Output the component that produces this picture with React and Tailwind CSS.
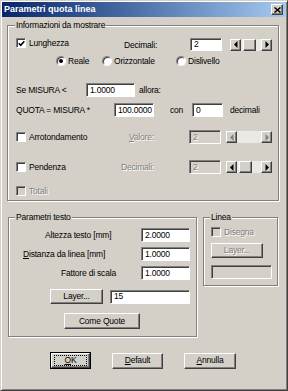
const raised =
  "border border-white border-r-[#404040] border-b-[#404040] shadow-[inset_-1px_-1px_0_#808080] bg-[#d4d0c8]";
const sunken =
  "border border-[#808080] border-r-white border-b-white shadow-[inset_1px_1px_0_#404040]";
const dim = "text-[#808080] [text-shadow:1px_1px_0_#fff]";

function Check({ checked, disabled }) {
  return (
    <span
      className={`w-[10px] h-[10px] shrink-0 flex items-center justify-center ${sunken} ${
        disabled ? "bg-[#d4d0c8]" : "bg-white"
      }`}
    >
      {checked && (
        <svg width="7" height="7" viewBox="0 0 7 7">
          <path d="M0.8 3.2 L2.7 5.2 L6.3 1.2" stroke="#000" strokeWidth="1.6" fill="none" />
        </svg>
      )}
    </span>
  );
}

function Radio({ on }) {
  return (
    <span className="w-[10px] h-[10px] shrink-0 rounded-full bg-white border border-[#808080] border-r-white border-b-white shadow-[inset_1px_1px_0_#404040] flex items-center justify-center">
      {on && <span className="w-[4px] h-[4px] rounded-full bg-black" />}
    </span>
  );
}

function Field({ className, value, disabled }) {
  return (
    <span
      className={`flex items-center pl-[3px] ${sunken} ${
        disabled ? `bg-[#d4d0c8] ${dim}` : "bg-white"
      } ${className}`}
    >
      {value}
    </span>
  );
}

function Arrow({ dir, disabled }) {
  return (
    <svg width="4" height="7" viewBox="0 0 4 7">
      <polygon
        points={dir === "l" ? "3.5,0 3.5,7 0,3.5" : "0.5,0 0.5,7 4,3.5"}
        fill={disabled ? "#808080" : "#000"}
      />
    </svg>
  );
}

function Scroll({ className, disabled }) {
  return (
    <div className={`flex h-[12px] bg-[#ebe9e5] ${className}`}>
      <span className={`w-[11px] h-full flex items-center justify-center ${raised}`}>
        <Arrow dir="l" disabled={disabled} />
      </span>
      {!disabled && <span className={`ml-[2px] w-[13px] h-full ${raised}`} />}
      <span className="flex-1" />
      <span className={`w-[11px] h-full flex items-center justify-center ${raised}`}>
        <Arrow dir="r" disabled={disabled} />
      </span>
    </div>
  );
}

function Btn({ className, children, disabled }) {
  return (
    <span className={`flex items-center justify-center ${raised} ${disabled ? dim : ""} ${className}`}>
      {children}
    </span>
  );
}

function Group({ title, className, legend, children }) {
  return (
    <div
      className={`relative flex flex-col border border-[#808080] shadow-[inset_1px_1px_0_#fff,1px_1px_0_#fff] ${className}`}
    >
      <span className={`absolute -top-[6px] ${legend} bg-[#d4d0c8] px-[1px] leading-[10px]`}>
        {title}
      </span>
      {children}
    </div>
  );
}

export default function App() {
  return (
    <div className="w-[288px] h-[391px] bg-[#d4d0c8] border border-[#d4d0c8] border-r-[#404040] border-b-[#404040] shadow-[inset_1px_1px_0_#fff,inset_-1px_-1px_0_#808080] p-[1px] font-['Liberation_Sans',Arial,sans-serif] text-[8.5px] tracking-[-0.2px] leading-none text-black overflow-hidden">
      <div className="h-[15px] flex items-center justify-between pl-[2px] pr-[3px] bg-linear-to-r from-[#0a246a] to-[#a6caf0]">
        <span className="text-white font-bold text-[9px] tracking-normal">Parametri quota linea</span>
        <span className={`w-[12px] h-[11px] flex items-center justify-center ${raised}`}>
          <svg width="7" height="6" viewBox="0 0 7 6">
            <path d="M0.5 0.5 L6.5 5.5 M6.5 0.5 L0.5 5.5" stroke="#000" strokeWidth="1.5" />
          </svg>
        </span>
      </div>

      <div className="flex flex-col">
        <Group title="Informazioni da mostrare" legend="left-[7px]" className="ml-[5px] mt-[8px] w-[272px] h-[176px]">
          <div className="mt-[12px] h-[13px] flex items-center pl-[8px]">
            <div className="w-[108px] self-start h-[10px] flex items-center">
              <Check checked />
              <span className="ml-[3px]">Lunghezza</span>
            </div>
            <span className="w-[66px] mt-[2px]">Decimali:</span>
            <Field className="w-[32px] h-[13px]" value="2" />
            <Scroll className="ml-[8px] w-[42px]" />
          </div>

          <div className="mt-[5px] h-[10px] flex items-center pl-[48px]">
            <div className="w-[46px] flex items-center gap-[2px]">
              <Radio on />
              <span>Reale</span>
            </div>
            <div className="w-[74px] flex items-center gap-[2px]">
              <Radio />
              <span>Orizzontale</span>
            </div>
            <div className="flex items-center gap-[2px]">
              <Radio />
              <span>Dislivello</span>
            </div>
          </div>

          <div className="mt-[17px] h-[14px] flex items-center pl-[8px]">
            <span className="w-[70px]">Se MISURA &lt;</span>
            <Field className="w-[49px] h-[14px]" value="1.0000" />
            <span className="ml-[4px]">allora:</span>
          </div>

          <div className="mt-[6px] h-[14px] flex items-center pl-[8px]">
            <span className="w-[98px]">QUOTA = MISURA *</span>
            <Field className="w-[40px] h-[14px]" value="100.0000" />
            <span className="ml-[16px] w-[22px]">con</span>
            <Field className="w-[31px] h-[14px]" value="0" />
            <span className="ml-[7px]">decimali</span>
          </div>

          <div className="mt-[13px] h-[14px] flex items-center pl-[8px]">
            <div className="w-[113px] flex items-center">
              <Check />
              <span className="ml-[3px]">Arrotondamento</span>
            </div>
            <span className={`w-[60px] ${dim}`}>
              <u>V</u>alore:
            </span>
            <Field className="w-[32px] h-[14px]" value="2" disabled />
            <Scroll className="ml-[5px] w-[46px]" disabled />
          </div>

          <div className="mt-[16px] h-[14px] flex items-center pl-[8px]">
            <div className="w-[105px] flex items-center">
              <Check />
              <span className="ml-[3px]">Pendenza</span>
            </div>
            <span className={`w-[68px] ${dim}`}>Decimali:</span>
            <Field className="w-[32px] h-[14px]" value="2" disabled />
            <Scroll className="ml-[5px] w-[46px]" />
          </div>

          <div className="mt-[12px] h-[10px] flex items-center pl-[8px]">
            <Check disabled />
            <span className={`ml-[3px] ${dim}`}>Totali</span>
          </div>
        </Group>

        <div className="mt-[16px] flex items-start">
          <Group title="Parametri testo" legend="left-[6px]" className="ml-[6px] w-[189px] h-[120px]">
            <div className="mt-[10px] h-[14px] flex items-center">
              <span className="w-[132px] pl-[36px]">Altezza testo [mm]</span>
              <Field className="w-[49px] h-[14px]" value="2.0000" />
            </div>
            <div className="mt-[5px] h-[14px] flex items-center">
              <span className="w-[132px] pl-[14px]">
                <u>D</u>istanza da linea [mm]
              </span>
              <Field className="w-[49px] h-[14px]" value="1.0000" />
            </div>
            <div className="mt-[5px] h-[14px] flex items-center">
              <span className="w-[132px] pl-[52px]">Fattore di scala</span>
              <Field className="w-[49px] h-[14px]" value="1.0000" />
            </div>
            <div className="mt-[9px] flex items-center">
              <Btn className="ml-[41px] w-[53px] h-[15px]">Layer...</Btn>
              <Field className="ml-[7px] w-[80px] h-[14px]" value="15" />
            </div>
            <div className="mt-[9px] flex items-center">
              <Btn className="ml-[55px] w-[76px] h-[16px]">Come Quote</Btn>
            </div>
          </Group>

          <Group title="Linea" legend="left-[6px]" className="ml-[6px] w-[75px] h-[69px]">
            <div className="mt-[9px] h-[10px] flex items-center pl-[7px]">
              <Check disabled />
              <span className={`ml-[3px] ${dim}`}>Disegna</span>
            </div>
            <div className="mt-[6px] flex">
              <Btn className="ml-[7px] w-[52px] h-[15px]" disabled>
                Layer...
              </Btn>
            </div>
            <div className="mt-[7px] flex">
              <Field className="ml-[7px] w-[61px] h-[14px]" value="" disabled />
            </div>
          </Group>
        </div>

        <div className="mt-[15px] flex items-center">
          <span className="ml-[48px] w-[41px] h-[17px] border border-black flex">
            <span className={`flex-1 flex items-center justify-center ${raised}`}>
              <span className="w-[33px] h-[11px] flex items-center justify-center border border-dotted border-black">
                <u>O</u>K
              </span>
            </span>
          </span>
          <Btn className="ml-[21px] w-[51px] h-[16px]">
            <u>D</u>efault
          </Btn>
          <Btn className="ml-[21px] w-[52px] h-[16px]">
            <u>A</u>nnulla
          </Btn>
        </div>
      </div>
    </div>
  );
}
